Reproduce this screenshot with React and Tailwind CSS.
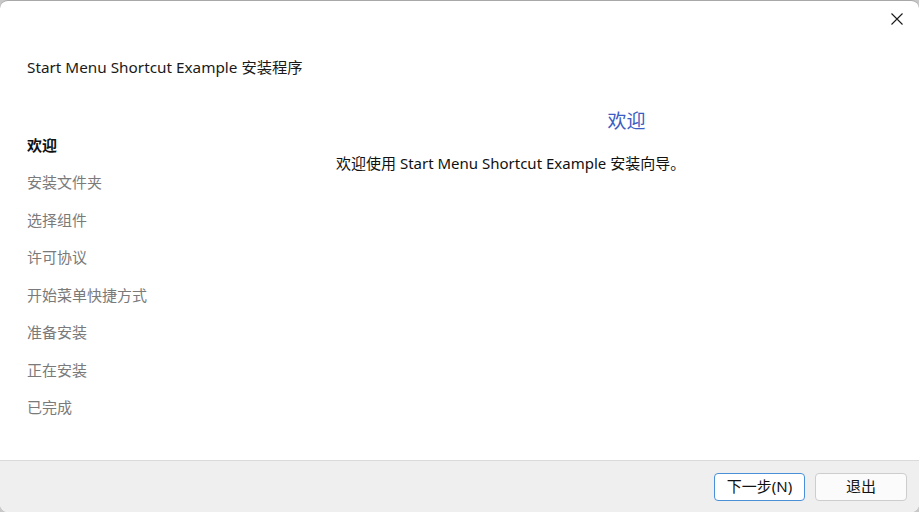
import React from "react";

const font = { fontFamily: '"Noto Sans", "Noto Sans CJK SC", sans-serif' };

const steps = ["欢迎", "安装文件夹", "选择组件", "许可协议", "开始菜单快捷方式", "准备安装", "正在安装", "已完成"];

export default function App() {
  return (
    <div className="w-[919px] h-[512px] bg-[#c8c8c8] overflow-hidden" style={font}>
      <div className="w-full h-full bg-white rounded-[8px] border-t border-[#a8a8a8] flex flex-col overflow-hidden">
        <div className="h-[36px] flex justify-end items-start">
          <button className="w-[44px] h-[36px] flex items-center justify-center text-[#1a1a1a]">
            <svg width="12" height="12" viewBox="0 0 12 12" stroke="currentColor" strokeWidth="1.1">
              <path d="M0.5 0.5 L11.5 11.5 M11.5 0.5 L0.5 11.5" />
            </svg>
          </button>
        </div>
        <div className="pl-[27px] pt-[20px] text-[15.3px] leading-[20px] text-[#1a1a1a]">
          Start Menu Shortcut Example 安装程序
        </div>
        <div className="flex-1 flex">
          <div className="w-[336px] pl-[27px] pt-[49px] flex flex-col">
            {steps.map((s, i) => (
              <div
                key={s}
                className={
                  "h-[37.5px] flex items-center text-[15px] " +
                  (i === 0 ? "font-bold text-[#111111]" : "text-[#7a7a7a]")
                }
              >
                {s}
              </div>
            ))}
          </div>
          <div className="flex-1 pt-[31px] pr-[2px]">
            <div className="text-center text-[19px] leading-[26px] text-[#3b5cc4]">欢迎</div>
            <div className="mt-[19px] text-[15px] leading-[20px] text-[#111111]">
              欢迎使用 Start Menu Shortcut Example 安装向导。
            </div>
          </div>
        </div>
        <div className="h-[52px] bg-[#efefef] border-t border-[#dadada] flex items-center justify-end gap-[10px] pr-[12px]">
          <button className="w-[91px] h-[28px] bg-white border border-[#4a90d9] rounded-[4px] text-[15px] text-[#111111] flex items-center justify-center">
            下一步(N)
          </button>
          <button className="w-[92px] h-[28px] bg-[#fbfbfb] border border-[#cdcdcd] rounded-[4px] text-[15px] text-[#111111] flex items-center justify-center">
            退出
          </button>
        </div>
      </div>
    </div>
  );
}
